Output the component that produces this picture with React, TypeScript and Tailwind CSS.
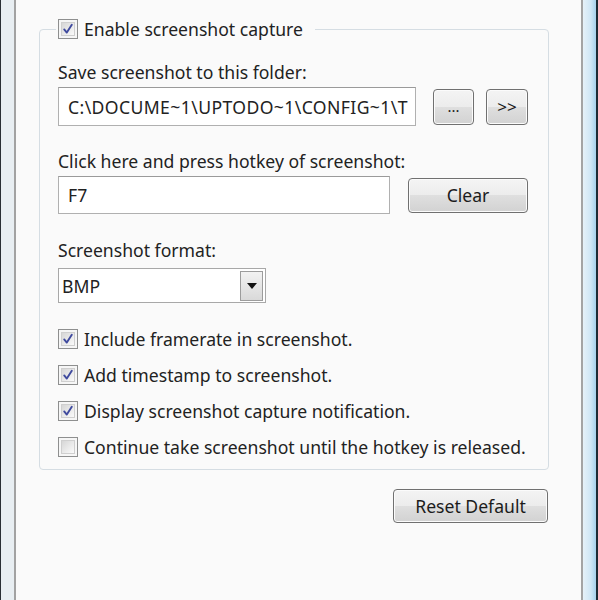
import React from "react";

const btn =
  "flex items-center justify-center rounded-[4px] border border-[#707070] bg-[linear-gradient(to_bottom,#f4f4f4_0%,#ececec_50%,#dfdfdf_50%,#d2d2d2_100%)] shadow-[inset_0_0_0_1px_#fbfbfb] text-[#1c1c1c]";

const Check = ({ checked }: { checked: boolean }) => (
  <span className="flex h-[20px] w-[20px] shrink-0 border border-[#8e8f8f] bg-[#f6f6f6] p-[2px]">
    <span className="flex h-full w-full items-center justify-center border border-[#cfcfcf] bg-[linear-gradient(135deg,#d6d6d6,#fafafa)]">
      {checked && (
        <svg width="12" height="12" viewBox="0 0 12 12" fill="none">
          <path
            d="M2.2 6.4 L4.8 9.6 L9.8 1.8"
            stroke="#3f4a9e"
            strokeWidth="1.9"
            strokeLinecap="round"
            strokeLinejoin="round"
          />
        </svg>
      )}
    </span>
  </span>
);

const CheckRow = ({ checked, label }: { checked: boolean; label: string }) => (
  <label className="flex h-[20px] items-center gap-[6px]">
    <Check checked={checked} />
    <span className="whitespace-nowrap">{label}</span>
  </label>
);

const options = [
  { label: "Include framerate in screenshot.", checked: true },
  { label: "Add timestamp to screenshot.", checked: true },
  { label: "Display screenshot capture notification.", checked: true },
  { label: "Continue take screenshot until the hotkey is released.", checked: false },
];

export default function App() {
  return (
    <div className="flex h-[600px] w-[598px] overflow-hidden font-['Noto_Sans',sans-serif] text-[17.6px] leading-[20px] text-[#222]">
      {/* window frame left */}
      <div className="w-[1px] bg-[#2a2f35]" />
      <div className="w-[13px] bg-[#e8eef2]" />
      <div className="w-[2px] bg-[#a2a2a2]" />

      {/* dialog body */}
      <div className="flex w-[565px] flex-col bg-[#fafafa] pl-[23px]">
        <fieldset className="mt-[19px] w-[510px] rounded-[4px] border border-[#d5dde3] pb-[12px] pl-[18px] pr-[18px]">
          <legend className="ml-[-2px] px-[2px] pr-[12px]">
            <CheckRow checked label="Enable screenshot capture" />
          </legend>

          <div className="mt-[23px]">Save screenshot to this folder:</div>
          <div className="mt-[5px] flex items-center">
            <div className="flex h-[39px] w-[358px] items-center overflow-hidden whitespace-nowrap border border-[#b0b0b0] border-t-[#9a9a9a] bg-white pl-[9px] tracking-[0.4px]">
              C:\DOCUME~1\UPTODO~1\CONFIG~1\T
            </div>
            <button className={`${btn} ml-[17px] h-[36px] w-[41px] pb-[2px] text-[15px]`}>...</button>
            <button className={`${btn} ml-[12px] h-[36px] w-[42px] text-[17px]`}>&gt;&gt;</button>
          </div>

          <div className="mt-[25px]">Click here and press hotkey of screenshot:</div>
          <div className="mt-[5px] flex items-center">
            <div className="flex h-[38px] w-[332px] items-center border border-[#b0b0b0] border-t-[#9a9a9a] bg-white pl-[9px]">
              F7
            </div>
            <button className={`${btn} ml-[18px] h-[35px] w-[120px]`}>Clear</button>
          </div>

          <div className="mt-[26px]">Screenshot format:</div>
          <div className="mt-[8px] flex h-[35px] w-[208px] items-center justify-between border border-[#a8a8a8] bg-white pl-[3px] pr-[2px]">
            <span>BMP</span>
            <span className="flex h-[30px] w-[23px] items-center justify-center border border-[#9c9c9c] bg-[linear-gradient(to_bottom,#f2f2f2,#d9d9d9)]">
              <svg width="10" height="6" viewBox="0 0 10 6">
                <path d="M0 0 L10 0 L5 6 Z" fill="#111" />
              </svg>
            </span>
          </div>

          <div className="mt-[26px] flex flex-col gap-[16px]">
            {options.map((o) => (
              <CheckRow key={o.label} checked={o.checked} label={o.label} />
            ))}
          </div>
        </fieldset>

        <div className="mt-[19px] flex w-[510px] justify-end pr-[1px]">
          <button className={`${btn} h-[34px] w-[155px]`}>Reset Default</button>
        </div>
      </div>

      {/* window frame right */}
      <div className="w-[2px] bg-[#a4a4a4]" />
      <div className="w-[13px] bg-[linear-gradient(to_right,#e6f1f8,#cfe6f5_60%,#a6d1ec)]" />
      <div className="w-[2px] bg-[#1d2a35]" />
    </div>
  );
}
